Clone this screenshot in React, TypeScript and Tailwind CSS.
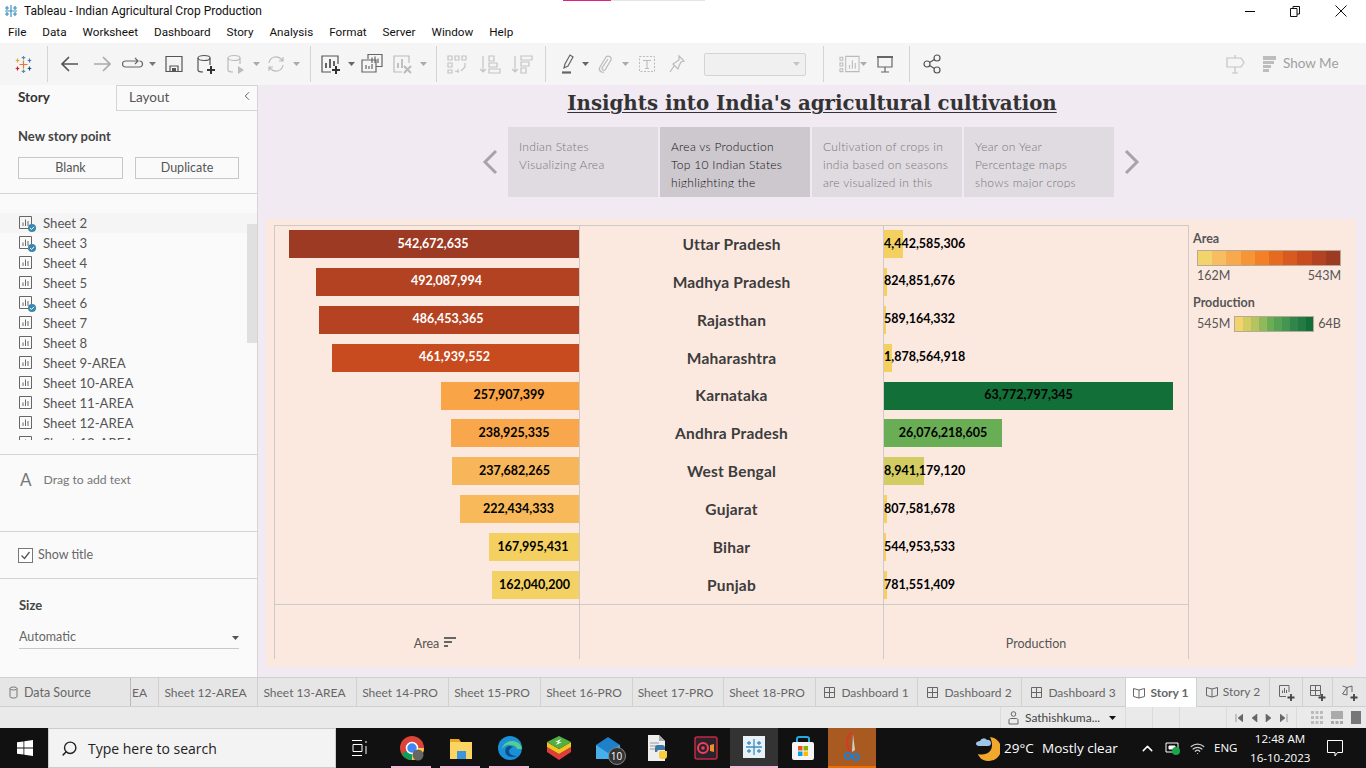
import React from 'react'
import { ChevronLeft, Search, ChevronUp, Wifi } from 'lucide-react'

const menus = ['File', 'Data', 'Worksheet', 'Dashboard', 'Story', 'Analysis', 'Format', 'Server', 'Window', 'Help']
const sheets = ['Sheet 2', 'Sheet 3', 'Sheet 4', 'Sheet 5', 'Sheet 6', 'Sheet 7', 'Sheet 8', 'Sheet 9-AREA', 'Sheet 10-AREA', 'Sheet 11-AREA', 'Sheet 12-AREA', 'Sheet 13-AREA']
const checked = ['Sheet 2', 'Sheet 3', 'Sheet 6']

const rows = [
  { state: 'Uttar Pradesh', area: '542,672,635', areaW: 'w-[290px]', areaC: 'bg-[#9c3a23] text-white', prod: '4,442,585,306', prodW: 'w-[19px]', prodC: 'bg-[#f3d060]' },
  { state: 'Madhya Pradesh', area: '492,087,994', areaW: 'w-[263px]', areaC: 'bg-[#b24222] text-white', prod: '824,851,676', prodW: 'w-[3px]', prodC: 'bg-[#f3d060]' },
  { state: 'Rajasthan', area: '486,453,365', areaW: 'w-[260px]', areaC: 'bg-[#b54321] text-white', prod: '589,164,332', prodW: 'w-[2px]', prodC: 'bg-[#f3d060]' },
  { state: 'Maharashtra', area: '461,939,552', areaW: 'w-[247px]', areaC: 'bg-[#c84b20] text-white', prod: '1,878,564,918', prodW: 'w-[8px]', prodC: 'bg-[#f3d060]' },
  { state: 'Karnataka', area: '257,907,399', areaW: 'w-[138px]', areaC: 'bg-[#f9a446] text-black', prod: '63,772,797,345', prodW: 'w-[289px]', prodC: 'bg-[#136f38] justify-center' },
  { state: 'Andhra Pradesh', area: '238,925,335', areaW: 'w-[128px]', areaC: 'bg-[#f9a74c] text-black', prod: '26,076,218,605', prodW: 'w-[118px]', prodC: 'bg-[#69ad55] justify-center' },
  { state: 'West Bengal', area: '237,682,265', areaW: 'w-[127px]', areaC: 'bg-[#f7b65a] text-black', prod: '8,941,179,120', prodW: 'w-[40px]', prodC: 'bg-[#d3cc62]' },
  { state: 'Gujarat', area: '222,434,333', areaW: 'w-[119px]', areaC: 'bg-[#f7b95a] text-black', prod: '807,581,678', prodW: 'w-[3px]', prodC: 'bg-[#f3d060]' },
  { state: 'Bihar', area: '167,995,431', areaW: 'w-[90px]', areaC: 'bg-[#f3d060] text-black', prod: '544,953,533', prodW: 'w-[2px]', prodC: 'bg-[#f3d060]' },
  { state: 'Punjab', area: '162,040,200', areaW: 'w-[87px]', areaC: 'bg-[#f3d164] text-black', prod: '781,551,409', prodW: 'w-[3px]', prodC: 'bg-[#f3d060]' },
]

const storyPoints = [
  { lines: ['Indian States', 'Visualizing Area'], active: false },
  { lines: ['Area vs Production', 'Top 10 Indian States', 'highlighting the'], active: true },
  { lines: ['Cultivation of crops in', 'india based on seasons', 'are visualized in this'], active: false },
  { lines: ['Year on Year', 'Percentage maps', 'shows major crops'], active: false },
]

const tabs = [
  { name: 'Sheet 12-AREA', w: 'w-[99px]' },
  { name: 'Sheet 13-AREA', w: 'w-[99px]' },
  { name: 'Sheet 14-PRO', w: 'w-[92px]' },
  { name: 'Sheet 15-PRO', w: 'w-[92px]' },
  { name: 'Sheet 16-PRO', w: 'w-[92px]' },
  { name: 'Sheet 17-PRO', w: 'w-[91px]' },
  { name: 'Sheet 18-PRO', w: 'w-[92px]' },
]

const areaRamp = ['bg-[#f3d36b]', 'bg-[#f7bd60]', 'bg-[#f9a94d]', 'bg-[#f69538]', 'bg-[#f37f26]', 'bg-[#e66a20]', 'bg-[#d85a20]', 'bg-[#c94c20]', 'bg-[#b24222]', 'bg-[#9c3a23]']
const prodRamp = ['bg-[#f3d36b]', 'bg-[#d3cc62]', 'bg-[#b5c45f]', 'bg-[#8fb95a]', 'bg-[#6bad55]', 'bg-[#55a253]', 'bg-[#43954f]', 'bg-[#31854a]', 'bg-[#237a42]', 'bg-[#136f38]']

function Caret({ cls = 'text-[#777]' }: { cls?: string }) {
  return (
    <svg width="7" height="4" viewBox="0 0 7 4" className={cls}>
      <path d="M0 0h7L3.5 4z" fill="currentColor" />
    </svg>
  )
}

function Ico({ children }: { children: React.ReactNode }) {
  return (
    <svg width="22" height="22" viewBox="0 0 22 22" fill="none" stroke="currentColor" strokeWidth="1.2">
      {children}
    </svg>
  )
}

function ToolSep({ w }: { w: string }) {
  return <div className={`h-[36px] border-l border-[#d4d4d4] shrink-0 ${w}`} />
}

function Slot({ w, children, cls = 'text-[#666]' }: { w: string; children?: React.ReactNode; cls?: string }) {
  return <div className={`flex items-center shrink-0 ${w} ${cls}`}>{children}</div>
}

function Toolbar() {
  return (
    <div className="h-[42px] bg-[#f5f5f5] flex items-center pl-[14px] shrink-0">
      <Slot w="w-[33px]">
        <svg width="19" height="19" viewBox="0 0 19 19" strokeWidth="1.2">
          <path d="M9.500 5.500v8M5.500 9.500h8" stroke="#e8762d" />
          <path d="M9.500 1v3.500M7.700 2.700h3.600M9.500 14.500V18M7.700 16.300h3.600" stroke="#5b8fa8" />
          <path d="M3.500 3.500v4M1.700 5.500h3.600" stroke="#e8a23d" />
          <path d="M15.500 3.500v4M13.700 5.500h3.600" stroke="#4e79a7" />
          <path d="M3.500 11.500v4M1.700 13.500h3.600" stroke="#c72035" />
          <path d="M15.500 11.500v4M13.700 13.500h3.600" stroke="#1f4e8c" />
        </svg>
      </Slot>
      <ToolSep w="w-[12px]" />
      <Slot w="w-[32px]" cls="text-[#555]">
        <Ico><path d="M19 11H3M10 4l-7 7 7 7" strokeWidth="1.700" /></Ico>
      </Slot>
      <Slot w="w-[31px]" cls="text-[#aaa]">
        <Ico><path d="M3 11h16M12 4l7 7-7 7" strokeWidth="1.700" /></Ico>
      </Slot>
      <Slot w="w-[27px]" cls="text-[#666]">
        <Ico><path d="M15 8H3.500a2.500 2.500 0 000 6h14a2.500 2.500 0 000-6M13 5l3 3-3 3" /></Ico>
      </Slot>
      <Slot w="w-[14px]"><Caret /></Slot>
      <Slot w="w-[32px]" cls="text-[#555]">
        <Ico><path d="M3 3.500h16v15H3z" /><path d="M7 18v-5h8v5" /><path d="M9 15h4v3H9z" fill="currentColor" stroke="none" /></Ico>
      </Slot>
      <Slot w="w-[30px]" cls="text-[#555]">
        <Ico>
          <ellipse cx="9" cy="5" rx="6" ry="2.500" />
          <path d="M3 5v12c0 1 2 2 5 2M15 5v7" />
          <path d="M16 13v8M12 17h8" stroke="#333" strokeWidth="2" />
        </Ico>
      </Slot>
      <Slot w="w-[28px]" cls="text-[#bbb]">
        <Ico>
          <ellipse cx="9" cy="5" rx="6" ry="2.500" />
          <path d="M3 5v12c0 1 2 2 5 2M15 5v6" />
          <path d="M13 13l6 4-6 4z" fill="currentColor" stroke="none" />
        </Ico>
      </Slot>
      <Slot w="w-[12px]"><Caret cls="text-[#aaa]" /></Slot>
      <Slot w="w-[28px]" cls="text-[#bbb]">
        <Ico><path d="M4 10a7 7 0 0112-4l2 2M18 12a7 7 0 01-12 4l-2-2M18 4v4h-4M4 18v-4h4" /></Ico>
      </Slot>
      <Slot w="w-[17px]"><Caret cls="text-[#aaa]" /></Slot>
      <ToolSep w="w-[10px]" />
      <Slot w="w-[28px]" cls="text-[#555]">
        <Ico>
          <path d="M18 11V3H2v16h9" />
          <path d="M6 15V10M10 15V6M14 13V8" strokeWidth="1.800" />
          <path d="M16 13v8M12 17h8" stroke="#333" strokeWidth="2" />
        </Ico>
      </Slot>
      <Slot w="w-[13px]"><Caret cls="text-[#666]" /></Slot>
      <Slot w="w-[30px]" cls="text-[#666]">
        <Ico>
          <path d="M7 6V1.500h14v12h-6" />
          <path d="M1 7h14v12H1z" fill="#f5f5f5" />
          <path d="M11 10V4.500M14 10V3.500M17 10V5.500M5 16v-4M8 16v-3M11 16v-5" />
        </Ico>
      </Slot>
      <Slot w="w-[29px]" cls="text-[#bbb]">
        <Ico>
          <path d="M18 10V3H3v16h8" />
          <path d="M7 15V10M11 15V6" strokeWidth="1.800" />
          <path d="M13 13l7 7M20 13l-7 7" strokeWidth="2" />
        </Ico>
      </Slot>
      <Slot w="w-[16px]"><Caret cls="text-[#aaa]" /></Slot>
      <ToolSep w="w-[10px]" />
      <Slot w="w-[33px]" cls="text-[#c4c4c4]">
        <Ico><path d="M2 3h4v4H2zM9 3h4v4H9zM16 3h4v4h-4zM2 10h4v4H2zM2 17h4v3H2zM19 10v4l-4 4M9 18l4 1M12 16v4" /></Ico>
      </Slot>
      <Slot w="w-[32px]" cls="text-[#c4c4c4]">
        <Ico><path d="M4 3v16M1 16l3 3 3-3M10 3h5v5h-5zM10 10h8v4h-8zM10 16h11v4H10z" /></Ico>
      </Slot>
      <Slot w="w-[34px]" cls="text-[#c4c4c4]">
        <Ico><path d="M4 3v16M1 16l3 3 3-3M10 3h11v4H10zM10 9h8v4h-8zM10 15h5v5h-5z" /></Ico>
      </Slot>
      <ToolSep w="w-[12px]" />
      <Slot w="w-[25px]" cls="text-[#666]">
        <Ico>
          <path d="M7 15l1-4 5-9 3 2-5 9z" />
          <path d="M5 19.500h9" strokeWidth="2.200" />
        </Ico>
      </Slot>
      <Slot w="w-[12px]"><Caret cls="text-[#666]" /></Slot>
      <Slot w="w-[28px]" cls="text-[#bbb]">
        <Ico><path d="M14 6l-6 9a2 2 0 003 2l6-10a3 3 0 00-5-3l-6 10c-2 3 1 6 4 5" /></Ico>
      </Slot>
      <Slot w="w-[14px]"><Caret cls="text-[#aaa]" /></Slot>
      <Slot w="w-[30px]" cls="text-[#bbb]">
        <Ico>
          <path d="M3.500 3.500h15v15h-15z" strokeDasharray="2 1.500" strokeWidth="1" />
          <path d="M7 7.500h8M11 7.500v8M9 15.500h4" strokeWidth="1.100" />
        </Ico>
      </Slot>
      <Slot w="w-[38px]" cls="text-[#bbb]">
        <Ico><path d="M13 3l5 5-3 1-2 4-1 3-5-5 3-2 3-2zM8 13l-4 6" /></Ico>
      </Slot>
      <div className="w-[102px] h-[23px] bg-[#f0f0f0] border border-[#d4d4d4] rounded-[2px] flex items-center justify-end pr-[5px] shrink-0 mr-[17px]">
        <Caret cls="text-[#c4c4c4]" />
      </div>
      <ToolSep w="w-[16px]" />
      <Slot w="w-[21px]" cls="text-[#bbb]">
        <Ico>
          <path d="M1 4h3v3H1zM1 10h3v3H1zM1 16h3v3H1zM7 3h14v16H7zM11 16v-4M14 16V7M17 16v-6" strokeWidth="1.100" />
        </Ico>
      </Slot>
      <Slot w="w-[14px]"><Caret cls="text-[#aaa]" /></Slot>
      <Slot w="w-[35px]" cls="text-[#666]">
        <Ico>
          <path d="M3 4h16" strokeWidth="2" />
          <path d="M4 4v10h14V4M11 14v5M7 19h8" />
        </Ico>
      </Slot>
      <ToolSep w="w-[12px]" />
      <Slot w="w-[303px]" cls="text-[#555]">
        <Ico>
          <circle cx="6" cy="11" r="3" />
          <circle cx="16" cy="5" r="3" />
          <circle cx="16" cy="17" r="3" />
          <path d="M8.500 9.500l5-3M8.500 12.500l5 3" />
        </Ico>
      </Slot>
      <Slot w="w-[39px]" cls="text-[#c4c4c4]">
        <Ico><path d="M11 2v3M11 14v6M8 20h6M3 5h14l3 4.500-3 4.500H3z" /></Ico>
      </Slot>
      <div className="flex flex-col gap-[1px] w-[20px] shrink-0">
        <div className="h-[4px] w-[13px] bg-[#bdbdbd]" />
        <div className="h-[3px] w-[11px] bg-[#bdbdbd]" />
        <div className="h-[3px] w-[8px] bg-[#bdbdbd]" />
        <div className="h-[3px] w-[6px] bg-[#bdbdbd]" />
      </div>
      <span className="font-['Lato',sans-serif] text-[13.5px] text-[#a0a0a0] -mt-[1px]">Show Me</span>
    </div>
  )
}

function SheetIcon({ on }: { on: boolean }) {
  return (
    <div className="relative w-[14px] h-[14px] shrink-0">
      <svg width="13" height="13" viewBox="0 0 13 13" fill="none" stroke="#666">
        <path d="M.5.5h12v12H.5z" />
        <path d="M4 10V6.500M6.500 10V3.500M9 10V5" />
      </svg>
      {on && (
        <svg width="8" height="8" viewBox="0 0 8 8" className="absolute left-[9px] top-[8px]">
          <circle cx="4" cy="4" r="4" fill="#3a87ad" />
          <path d="M2 4l1.500 1.500L6 2.800" stroke="#fff" fill="none" />
        </svg>
      )}
    </div>
  )
}

function Sidebar() {
  return (
    <div className="w-[258px] shrink-0 bg-[#fafafa] border-r border-[#d4d4d4] flex flex-col font-['Lato',sans-serif] text-[#555]">
      <div className="h-[26px] flex text-[13.5px]">
        <div className="w-[116px] pl-[18px] pt-[2px] font-bold text-[#333]">Story</div>
        <div className="flex-1 border-l border-b border-t border-[#d4d4d4] bg-[#fafafa] pl-[12px] pt-[1px] flex justify-between pr-[3px]">
          <span>Layout</span>
          <ChevronLeft size={14} strokeWidth={1.500} className="mt-[2px]" />
        </div>
      </div>
      <div className="h-[83px] border-b border-[#d4d4d4] px-[18px] pt-[17px]">
        <div className="text-[13px] font-bold text-[#444] leading-[16px]">New story point</div>
        <div className="flex gap-[12px] mt-[13px] text-[12.5px]">
          <div className="w-[105px] h-[22px] border border-[#c8c8c8] flex items-center justify-center">Blank</div>
          <div className="w-[104px] h-[22px] border border-[#c8c8c8] flex items-center justify-center">Duplicate</div>
        </div>
      </div>
      <div className="h-[261px] border-b border-[#d4d4d4] pt-[19px]">
        <div className="relative h-[227px] overflow-hidden">
          {sheets.map((s, i) => (
            <div key={s} className={`h-[20px] flex items-center pl-[19px] gap-[10px] text-[13.2px] text-[#555] ${i === 0 ? 'bg-[#f5f5f5]' : ''}`}>
              <SheetIcon on={checked.includes(s)} />
              <span className="pt-[1px]">{s}</span>
            </div>
          ))}
          <div className="absolute right-0 top-[11px] w-[10px] h-[119px] bg-[#e0e0e0]" />
        </div>
      </div>
      <div className="h-[77px] border-b border-[#d4d4d4] pl-[20px] pt-[16px] flex items-start gap-[12px]">
        <span className="text-[17px] leading-[18px] text-[#777]">A</span>
        <span className="text-[12.2px] leading-[18px] text-[#777]">Drag to add text</span>
      </div>
      <div className="h-[47px] border-b border-[#d4d4d4] pl-[18px] flex items-center gap-[5px]">
        <div className="w-[15px] h-[15px] border border-[#777] bg-white flex items-center justify-center">
          <svg width="11" height="11" viewBox="0 0 11 11" fill="none" stroke="#555" strokeWidth="1.300"><path d="M1.500 5.500l3 3 5-6.500" /></svg>
        </div>
        <span className="text-[12.5px] text-[#666] pt-[1px]">Show title</span>
      </div>
      <div className="px-[19px] pt-[18px]">
        <div className="text-[13px] font-bold text-[#444] leading-[16px]">Size</div>
        <div className="mt-[11px] h-[25px] w-[220px] border-b border-[#c8c8c8] flex items-center justify-between pt-[3px] text-[12.5px] text-[#666]">
          <span>Automatic</span>
          <Caret cls="text-[#555]" />
        </div>
      </div>
    </div>
  )
}

function BigChevron({ dir }: { dir: 'left' | 'right' }) {
  return (
    <svg width="16" height="26" viewBox="0 0 16 26" fill="none" stroke="#a8a3a8" strokeWidth="3">
      <path d={dir === 'left' ? 'M14 2L3 13l11 11' : 'M2 2l11 11L2 24'} />
    </svg>
  )
}

function StoryNav() {
  return (
    <div className="h-[70px] flex items-center justify-center font-['Lato',sans-serif] shrink-0 pr-[2px]">
      <BigChevron dir="left" />
      <div className="flex gap-[2px] mx-[10px]">
        {storyPoints.map((p) => (
          <div key={p.lines[0]} className={`w-[150px] h-[70px] px-[11px] pt-[11px] text-[12px] font-light tracking-[0.3px] whitespace-nowrap ${p.active ? 'bg-[#cdc8ce] text-[#111]' : 'bg-[#e0dbe1] text-[#777]'}`}>
            <div className="h-[50px] overflow-hidden leading-[18px]">
              {p.lines.map((l) => (
                <div key={l}>{l}</div>
              ))}
            </div>
          </div>
        ))}
      </div>
      <BigChevron dir="right" />
    </div>
  )
}

function Legend({ ramp }: { ramp: string[] }) {
  return (
    <div className="flex border border-[#b5a998]">
      {ramp.map((c) => (
        <div key={c} className={`h-[14px] flex-1 ${c}`} />
      ))}
    </div>
  )
}

function Chart() {
  return (
    <div className="ml-[8px] mr-[10px] mt-[22px] h-[448px] bg-[#fbe9e0] pl-[8px] pt-[6px] flex font-['Lato',sans-serif]">
      <div className="w-[915px] h-[434px] border-l border-r border-t border-[#cfcac6] shrink-0 flex flex-col">
        <div className="h-[380px] -mt-px flex flex-col border-b border-[#cfcac6] shrink-0">
          {rows.map((r) => (
            <div key={r.state} className="flex-1 flex text-[12.5px] font-bold">
              <div className="w-[305px] flex items-center justify-end border-r border-[#cfcac6]">
                <div className={`h-[28px] flex items-center justify-center pr-[2px] ${r.areaW} ${r.areaC}`}>{r.area}</div>
              </div>
              <div className="w-[304px] flex items-center justify-center border-r border-[#cfcac6] text-[15.5px] tracking-[0.2px] text-[#3c3c3c] pt-[1px]">{r.state}</div>
              <div className="flex-1 flex items-center text-black">
                <div className={`h-[28px] flex items-center whitespace-nowrap ${r.prodW} ${r.prodC}`}>{r.prod}</div>
              </div>
            </div>
          ))}
        </div>
        <div className="flex-1 flex text-[12.5px] text-[#555]">
          <div className="w-[305px] border-r border-[#cfcac6] flex items-end justify-center pb-[7px] pl-[16px] gap-[5px]">
            <span className="leading-[16px]">Area</span>
            <svg width="12" height="11" viewBox="0 0 12 11" className="mb-[4px]" fill="#666">
              <path d="M0 0h12v2H0zM0 4h8v2H0zM0 8h4v2H0z" />
            </svg>
          </div>
          <div className="w-[304px] border-r border-[#cfcac6]" />
          <div className="flex-1 flex items-end justify-center pb-[7px] leading-[16px]">Production</div>
        </div>
      </div>
      <div className="ml-[4px] pt-[6px] w-[150px] text-[#555]">
        <div className="text-[12.5px] font-bold leading-[15px]">Area</div>
        <div className="ml-[4px] mt-[4px] w-[144px]">
          <Legend ramp={areaRamp} />
          <div className="flex justify-between text-[12.5px] leading-[16px] mt-[2px]">
            <span>162M</span>
            <span>543M</span>
          </div>
        </div>
        <div className="text-[12.5px] font-bold leading-[15px] mt-[11px]">Production</div>
        <div className="ml-[4px] mt-[5px] w-[144px] flex items-center gap-[4px] text-[12.5px]">
          <span>545M</span>
          <div className="w-[80px]">
            <Legend ramp={prodRamp} />
          </div>
          <span>64B</span>
        </div>
      </div>
    </div>
  )
}

function Tabs() {
  return (
    <div className="h-[30px] bg-[#e6e6e6] border-t border-b border-[#d0d0d0] flex font-['Lato',sans-serif] text-[12px] text-[#666] shrink-0">
      <div className="w-[131px] border-r border-[#bbb] flex items-center pl-[9px] gap-[6px] pt-[1px]">
        <svg width="9" height="13" viewBox="0 0 9 13" fill="none" stroke="#777">
          <ellipse cx="4.500" cy="2.500" rx="3.500" ry="1.500" />
          <path d="M1 2.500v8c0 1 1.500 1.500 3.500 1.500S8 11.500 8 10.500v-8" />
        </svg>
        <span className="text-[12.5px] pt-[1px]">Data Source</span>
      </div>
      <div className="w-[28px] border-r border-[#d0d0d0] flex items-center pl-[1px] pt-[1px]">EA</div>
      {tabs.map((t) => (
        <div key={t.name} className={`${t.w} border-r border-[#d0d0d0] flex items-center justify-center whitespace-nowrap pt-[1px] pr-[5px]`}>{t.name}</div>
      ))}
      {['Dashboard 1', 'Dashboard 2', 'Dashboard 3'].map((d) => (
        <div key={d} className={`${d === 'Dashboard 1' ? 'w-[102px]' : 'w-[104px]'} border-r border-[#d0d0d0] flex items-center justify-center gap-[6px] pt-[1px]`}>
          <svg width="11" height="11" viewBox="0 0 11 11" fill="none" stroke="#666"><path d="M.5.5h10v10H.5zM5.500.5v10M.5 5.500h10" /></svg>
          <span>{d}</span>
        </div>
      ))}
      {['Story 1', 'Story 2'].map((d) => (
        <div key={d} className={`flex items-center justify-center gap-[5px] border-r border-[#d0d0d0] ${d === 'Story 1' ? 'w-[71px] bg-white font-bold -mb-px' : 'w-[73px]'}`}>
          <svg width="12" height="12" viewBox="0 0 12 12" fill="none" stroke="#666"><path d="M.5 1.500L6 3l5.500-1.500v8L6 11 .5 9.500zM6 3v8" /></svg>
          <span>{d}</span>
        </div>
      ))}
      {['w-[33px]', 'w-[30px]', 'flex-1'].map((w, i) => (
        <div key={w} className={`${w} ${i < 2 ? 'border-r border-[#d0d0d0]' : ''} flex items-center justify-center`}>
          <svg width="17" height="17" viewBox="0 0 17 17" fill="none" stroke="#666">
            {i === 0 && <path d="M11 8V1.500H1.500v11H8M4.500 9V6.500M6.500 9V4M8.500 9V6" />}
            {i === 1 && <path d="M1.500 1.500h10v10h-10zM6.500 1.500v10M1.500 6.500h10" />}
            {i === 2 && <path d="M1.500 2L6 3.500 11 2v6M6 3.500V11L1.500 10z" />}
            <path d="M13 10v7M9.500 13.500h7" stroke="#444" strokeWidth="1.800" />
          </svg>
        </div>
      ))}
    </div>
  )
}

function StatusBar() {
  return (
    <div className="h-[21px] bg-[#eaeaea] flex justify-end font-['Lato',sans-serif] text-[12px] text-[#444] shrink-0">
      <div className="w-[126px] border-l border-r border-[#dcdcdc] flex items-center pl-[7px] gap-[6px]">
        <svg width="11" height="14" viewBox="0 0 11 14" fill="none" stroke="#666"><circle cx="5.500" cy="3" r="2.300" /><path d="M1 13V9c0-1 1-1.500 2-1.500h5c1 0 2 .5 2 1.500v4z" /></svg>
        <span className="whitespace-nowrap">Sathishkuma...</span>
        <Caret cls="text-[#111] ml-[3px]" />
      </div>
      <div className="w-[27px] border-r border-[#dcdcdc]" />
      <div className="w-[27px] border-r border-[#dcdcdc]" />
      <div className="w-[47px] border-r border-[#dcdcdc]" />
      <div className="w-[70px] border-r border-[#dcdcdc] flex items-center justify-around px-[4px]">
        {['M1 0v8M8 0v8L3 4z', 'M7 0v8L2 4z', 'M1 0v8l5-4z', 'M0 0v8l5-4zM7 0v8'].map((d) => (
          <svg key={d} width="8" height="8" viewBox="0 0 8 8" fill="#666" stroke="#666" strokeWidth=".6"><path d={d} /></svg>
        ))}
      </div>
      <div className="w-[69px] flex items-center gap-[8px] pl-[14px]">
        <svg width="12" height="13" viewBox="0 0 12 13" fill="#bbb"><path d="M0 0h3v3H0zM4.500 0h3v3h-3zM9 0h3v3H9zM0 5h3v3H0zM4.500 5h3v3h-3zM9 5h3v3H9zM0 10h3v3H0zM4.500 10h3v3h-3zM9 10h3v3H9z" /></svg>
        <svg width="12" height="13" viewBox="0 0 12 13" fill="#aaa"><path d="M0 0h12v8H0zM0 10h3v3H0zM4.500 10h3v3h-3zM9 10h3v3H9z" /></svg>
        <div className="w-[10px] h-[13px] bg-[#777]" />
      </div>
    </div>
  )
}

function TaskIcon({ w, pink, children }: { w: string; pink?: boolean; children: React.ReactNode }) {
  return (
    <div className={`h-[40px] flex items-center justify-center relative ${w}`}>
      {children}
      {pink && <div className="absolute bottom-0 left-[4px] right-[5px] h-[2px] bg-[#f3b8d8]" />}
    </div>
  )
}

function Taskbar() {
  return (
    <div className="h-[40px] bg-[#111] flex items-center text-white font-['Open_Sans',sans-serif] shrink-0">
      <div className="w-[48px] flex justify-center pl-[1px]">
        <svg width="16" height="16" viewBox="0 0 16 16" fill="#fff"><path d="M0 2.300l6.500-.9v6.200H0zM7.300 1.300L16 0v7.600H7.300zM0 8.400h6.500v6.200L0 13.700zM7.300 8.400H16V16l-8.700-1.200z" /></svg>
      </div>
      <div className="w-[288px] h-[40px] bg-[#f3f3f3] border border-[#ccc] flex items-center pl-[12px] gap-[10px] text-[#222] text-[14px] shrink-0">
        <Search size={17} className="-scale-x-100 text-[#222]" />
        <span>Type here to search</span>
      </div>
      <div className="w-[32px] flex justify-end">
        <svg width="16" height="16" viewBox="0 0 16 16" fill="none" stroke="#fff"><path d="M0 .5h10M0 15.500h10M1 4.500h9v7H1zM14 1v2M14 6v8" /></svg>
      </div>
      <div className="flex items-center ml-[19px]">
        <TaskIcon w="w-[49px]" pink>
          <svg width="26" height="26" viewBox="0 0 26 26">
            <circle cx="13" cy="13" r="12" fill="#db4437" />
            <path d="M13 13L2.600 19A12 12 0 0013 25z" fill="#0f9d58" />
            <path d="M13 13l0 12a12 12 0 0012-12z" fill="#ffcd40" />
            <circle cx="13" cy="13" r="5.500" fill="#4285f4" stroke="#fff" strokeWidth="1.500" />
            <circle cx="19" cy="20" r="5.500" fill="#666" />
          </svg>
        </TaskIcon>
        <TaskIcon w="w-[49px]" pink>
          <svg width="24" height="22" viewBox="0 0 24 22">
            <path d="M1 2h9l2 3H1z" fill="#e9a820" />
            <path d="M1 5h22v17H1z" fill="#fcd462" />
            <path d="M8 14h9v8H8z" fill="#3a96dd" />
          </svg>
        </TaskIcon>
        <TaskIcon w="w-[49px]" pink>
          <svg width="26" height="26" viewBox="0 0 26 26">
            <circle cx="13" cy="13" r="12" fill="#1b90d8" />
            <path d="M25 14c-1-6-6-8-10-8-5 0-9 3-10 8 2-3 5-5 9-4 4 0 6 3 6 4z" fill="#54d08a" />
            <path d="M13 11c-4 0-6 4-4 8 2 3 7 4 11 2-3 0-8-1-8-5 0-2 2-3 4-4z" fill="#0a4f8f" />
          </svg>
        </TaskIcon>
        <TaskIcon w="w-[49px]">
          <svg width="26" height="28" viewBox="0 0 26 28">
            <path d="M13 20l12-7v5l-12 8-12-8v-5z" fill="#e03c3c" />
            <path d="M13 15l12-7v5l-12 7-12-7V8z" fill="#f4c320" />
            <path d="M13 2l12 6-12 7L1 8z" fill="#52b043" />
            <path d="M9 8l6-3-2 3 3 0-6 3 2-3z" fill="#fff" />
          </svg>
        </TaskIcon>
        <TaskIcon w="w-[49px]">
          <div className="relative">
            <svg width="26" height="24" viewBox="0 0 26 24">
              <path d="M1 9L13 1l12 8v14H1z" fill="#1d80c9" />
              <path d="M1 9l12 8 12-8v14H1z" fill="#47b0ea" />
            </svg>
            <div className="absolute -right-[5px] -bottom-[5px] w-[18px] h-[18px] rounded-full bg-[#333] border border-[#888] text-[10px] flex items-center justify-center">10</div>
          </div>
        </TaskIcon>
        <TaskIcon w="w-[49px]">
          <svg width="24" height="28" viewBox="0 0 24 28">
            <path d="M3 1h11l6 6v20H3z" fill="#eee" />
            <path d="M14 1l6 6h-6z" fill="#aaa" />
            <path d="M5 9h9M5 12h9M5 15h6" stroke="#999" />
            <path d="M12 11h5a3 3 0 013 3v2h-6a2 2 0 00-2 2h-2v-4a3 3 0 012-3z" fill="#3b77a8" />
            <path d="M22 17h-5a2 2 0 00-3 2v3a3 3 0 003 3h2a3 3 0 003-3z" fill="#f7cd3c" />
          </svg>
        </TaskIcon>
        <TaskIcon w="w-[49px]">
          <svg width="24" height="24" viewBox="0 0 24 24">
            <rect x="1" y="1" width="22" height="22" rx="2" fill="#2b2230" stroke="#c6283a" strokeWidth="1.500" />
            <circle cx="9" cy="12" r="5" fill="none" stroke="#ef4056" strokeWidth="2" />
            <circle cx="9" cy="12" r="1.800" fill="#ef4056" />
            <path d="M16 9l4-1v8l-4-1z" fill="#f28c28" />
          </svg>
        </TaskIcon>
        <div className="w-[48px] h-[40px] bg-[#333] border-b-2 border-[#f3b8d8] flex items-center justify-center">
          <div className="w-[22px] h-[22px] bg-[#e8f1f6] flex items-center justify-center">
            <svg width="18" height="18" viewBox="0 0 18 18" stroke="#3f8fc0" strokeWidth="1.300"><path d="M9 1v16M1 9h16M4 3v4M2 5h4M14 3v4M12 5h4M4 11v4M2 13h4M14 11v4M12 13h4" /></svg>
          </div>
        </div>
        <TaskIcon w="w-[50px]">
          <svg width="24" height="26" viewBox="0 0 24 26">
            <path d="M6 8V4a2 2 0 012-2h8a2 2 0 012 2v4" fill="none" stroke="#25a8e0" strokeWidth="2" />
            <rect x="1" y="7" width="22" height="18" rx="2" fill="#f5f5f5" />
            <path d="M7 11h4.500v4.500H7z" fill="#f25022" />
            <path d="M12.500 11H17v4.500h-4.500z" fill="#7fba00" />
            <path d="M7 16.500h4.500V21H7z" fill="#00a4ef" />
            <path d="M12.500 16.500H17V21h-4.500z" fill="#ffb900" />
          </svg>
        </TaskIcon>
        <div className="w-[48px] h-[40px] bg-[#a85a20] border-b-2 border-[#ef6c00] flex items-center justify-center">
          <svg width="20" height="30" viewBox="0 0 20 30">
            <path d="M10 1C4 3 4 14 8 20" fill="none" stroke="#d8382a" strokeWidth="2" />
            <path d="M11 2l2 16-3 2z" fill="#d0d0d0" />
            <circle cx="6" cy="24" r="3" fill="none" stroke="#1f7fd0" strokeWidth="2" />
            <circle cx="14" cy="25" r="3" fill="none" stroke="#1f7fd0" strokeWidth="2" />
          </svg>
        </div>
      </div>
      <div className="ml-[96px] w-[30px] flex justify-center">
        <svg width="26" height="28" viewBox="0 0 26 28">
          <path d="M16 3a12 12 0 01-2 24C8 27 5 23 4 20c8 2 14-2 14-9 0-3-1-6-2-8z" fill="#f2a82c" />
          <path d="M6 7a4 4 0 017-1 3 3 0 014 3c0 2-1 3-3 3H5c-2 0-3-1-3-2.500S4 7 6 7z" fill="#9fc5e8" />
        </svg>
      </div>
      <span className="ml-[2px] text-[13.5px] w-[38px] whitespace-nowrap">29°C</span>
      <span className="text-[13.5px] w-[97px] whitespace-nowrap">Mostly clear</span>
      <ChevronUp size={17} className="text-white" />
      <div className="ml-[9px] w-[16px]">
        <svg width="16" height="16" viewBox="0 0 16 16" fill="none" stroke="#fff">
          <path d="M1 3h12v9H1z" />
          <path d="M4 6h6v3H4z" fill="#fff" />
          <circle cx="11" cy="11" r="4" fill="#1aa64a" stroke="none" />
        </svg>
      </div>
      <Wifi size={15} className="ml-[9px] text-[#ccc]" />
      <span className="ml-[9px] text-[11.5px] w-[30px]">ENG</span>
      <div className="ml-[6px] w-[60px] text-[11.6px] leading-[19px] text-center whitespace-nowrap">
        <div>12:48 AM</div>
        <div>16-10-2023</div>
      </div>
      <div className="ml-[17px]">
        <svg width="17" height="17" viewBox="0 0 17 17" fill="none" stroke="#fff"><path d="M.5.500h15v12h-5L8 16v-3.500H.5z" /></svg>
      </div>
    </div>
  )
}

export default function App() {
  return (
    <div className="w-[1366px] h-[768px] overflow-hidden flex flex-col bg-white relative font-['Roboto',sans-serif]">
      <div className="absolute top-0 left-[563px] w-[142px] h-[1px] bg-[#e5e5e5]">
        <div className="w-[48px] h-[1px] bg-[#e0218a]" />
      </div>
      {/* window title */}
      <div className="h-[22px] flex items-center pl-[3px] gap-[5px] text-[12px] text-[#111] shrink-0">
        <svg width="16" height="16" viewBox="0 0 16 16" stroke="#3f8fc0" strokeWidth="1.200">
          <path d="M8 2v12M2 8h12M4 3v4M2 5h4M12 3v4M10 5h4M4 9v4M2 11h4M12 9v4M10 11h4" />
        </svg>
        <span>Tableau - Indian Agricultural Crop Production</span>
        <div className="ml-auto flex items-center gap-[35px] pr-[19px]">
          <div className="w-[10px] h-[1px] bg-black" />
          <svg width="10" height="11" viewBox="0 0 10 11" fill="none" stroke="#111"><path d="M.5 2.500h6.500v8H.5zM3 2.500V.5h6.500v7.500H7" /></svg>
          <svg width="12" height="12" viewBox="0 0 12 12" stroke="#111"><path d="M.5.500l11 11M11.500.500l-11 11" /></svg>
        </div>
      </div>
      {/* menu */}
      <div className="h-[21px] flex items-center pl-[8px] gap-[16px] text-[11.7px] text-[#111] shrink-0">
        {menus.map((m) => (
          <span key={m}>{m}</span>
        ))}
      </div>
      <Toolbar />
      <div className="flex flex-1 min-h-0">
        <Sidebar />
        <div className="flex-1 bg-[#f1eaf3] flex flex-col">
          <div className="h-[42px] flex justify-center items-center pb-[7px] shrink-0">
            <span className="font-['DejaVu_Serif',serif] font-bold text-[19.8px] leading-[28px] text-[#333] underline decoration-1 underline-offset-[2px]">Insights into India's agricultural cultivation</span>
          </div>
          <StoryNav />
          <Chart />
        </div>
      </div>
      <Tabs />
      <StatusBar />
      <Taskbar />
    </div>
  )
}
